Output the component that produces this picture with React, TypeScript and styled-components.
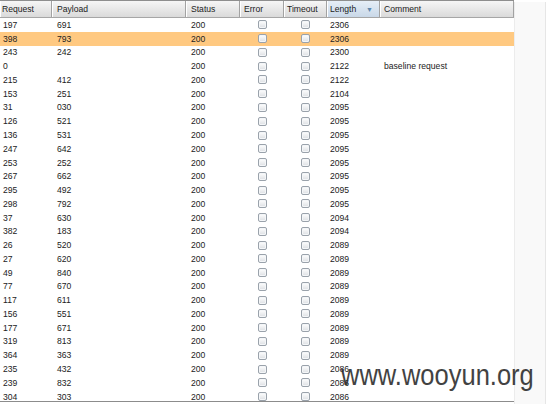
import styled, { createGlobalStyle } from 'styled-components';

const GlobalStyle = createGlobalStyle`
  html, body {
    margin: 0;
    padding: 0;
    background: #ffffff;
  }
  body {
    font-family: "Liberation Sans", Arial, sans-serif;
  }
`;

const COLS = '52px 134px 54px 44px 43px 53px 134px';

const Page = styled.div`
  position: relative;
  width: 546px;
  height: 404px;
  display: flex;
  overflow: hidden;
`;

const Table = styled.div`
  width: 514px;
  height: 401px;
  overflow: hidden;
  border-bottom: 1px solid #8c8c8c;
  display: flex;
  flex-direction: column;
`;

const Filler = styled.div`
  flex: 1;
  background: #f9f9f9;
  border-left: 1px solid #ececec;
  border-right: 1px solid #e6e6e6;
  margin-top: 2px;
`;

const HeaderRow = styled.div`
  display: grid;
  grid-template-columns: ${COLS};
  height: 16px;
  border-top: 1px solid #8e8e8e;
  border-bottom: 1px solid #a6a6a6;
  flex-shrink: 0;
`;

const HeaderCell = styled.div<{ $sorted?: boolean; $pad?: number }>`
  display: flex;
  align-items: center;
  justify-content: space-between;
  padding-left: ${p => p.$pad ?? 4}px;
  padding-right: 6px;
  font-size: 8.6px;
  color: #1c1c1c;
  border-right: 1px solid #a2a2a2;
  box-shadow: inset 1px 0 0 #ffffff;
  background: ${p =>
    p.$sorted
      ? 'linear-gradient(#e6eef7, #c9d8e8)'
      : 'linear-gradient(#f6f6f6, #dadada)'};
`;

const SortArrow = styled.span`
  font-size: 7px;
  color: #5f87ad;
`;

const Row = styled.div<{ $selected?: boolean }>`
  display: grid;
  grid-template-columns: ${COLS};
  height: 13.78px;
  flex-shrink: 0;
  background: ${p => (p.$selected ? '#ffc981' : 'transparent')};
`;

const Cell = styled.div<{ $pad?: number }>`
  display: flex;
  align-items: center;
  padding-left: ${p => p.$pad ?? 5}px;
  font-size: 8.6px;
  color: #222222;
  white-space: nowrap;
`;

const CheckCell = styled.div`
  display: flex;
  align-items: center;
  justify-content: center;
`;

const Check = styled.span`
  width: 7px;
  height: 7px;
  border: 1px solid #9aa2ab;
  border-radius: 2px;
  background: linear-gradient(#ffffff, #dcdfe3);
  box-shadow: inset 0 0 0 1px #f4f6f8;
`;

const Watermark = styled.div`
  position: absolute;
  left: 341px;
  top: 358px;
  font-family: "Liberation Sans", Arial, sans-serif;
  font-size: 30px;
  color: #2e2e2e;
  transform: scaleX(0.85);
  transform-origin: left top;
  white-space: nowrap;
  opacity: 0.9;
`;

type Entry = { req: string; payload: string; len: string; comment?: string };

const rows: Entry[] = [
  { req: '197', payload: '691', len: '2306' },
  { req: '398', payload: '793', len: '2306' },
  { req: '243', payload: '242', len: '2300' },
  { req: '0', payload: '', len: '2122', comment: 'baseline request' },
  { req: '215', payload: '412', len: '2122' },
  { req: '153', payload: '251', len: '2104' },
  { req: '31', payload: '030', len: '2095' },
  { req: '126', payload: '521', len: '2095' },
  { req: '136', payload: '531', len: '2095' },
  { req: '247', payload: '642', len: '2095' },
  { req: '253', payload: '252', len: '2095' },
  { req: '267', payload: '662', len: '2095' },
  { req: '295', payload: '492', len: '2095' },
  { req: '298', payload: '792', len: '2095' },
  { req: '37', payload: '630', len: '2094' },
  { req: '382', payload: '183', len: '2094' },
  { req: '26', payload: '520', len: '2089' },
  { req: '27', payload: '620', len: '2089' },
  { req: '49', payload: '840', len: '2089' },
  { req: '77', payload: '670', len: '2089' },
  { req: '117', payload: '611', len: '2089' },
  { req: '156', payload: '551', len: '2089' },
  { req: '177', payload: '671', len: '2089' },
  { req: '319', payload: '813', len: '2089' },
  { req: '364', payload: '363', len: '2089' },
  { req: '235', payload: '432', len: '2086' },
  { req: '239', payload: '832', len: '2086' },
  { req: '304', payload: '303', len: '2086' },
];

const App = () => {
  return (
    <>
      <GlobalStyle />
      <Page>
        <Table>
          <HeaderRow>
            <HeaderCell $pad={2}>Request</HeaderCell>
            <HeaderCell $pad={5}>Payload</HeaderCell>
            <HeaderCell $pad={5}>Status</HeaderCell>
            <HeaderCell>Error</HeaderCell>
            <HeaderCell $pad={3}>Timeout</HeaderCell>
            <HeaderCell $sorted $pad={3}>
              Length
              <SortArrow>▼</SortArrow>
            </HeaderCell>
            <HeaderCell>Comment</HeaderCell>
          </HeaderRow>
          {rows.map((r, i) => (
            <Row key={r.req} $selected={i === 1}>
              <Cell $pad={3}>{r.req}</Cell>
              <Cell>{r.payload}</Cell>
              <Cell>200</Cell>
              <CheckCell>
                <Check />
              </CheckCell>
              <CheckCell>
                <Check />
              </CheckCell>
              <Cell $pad={3}>{r.len}</Cell>
              <Cell $pad={4}>{r.comment ?? ''}</Cell>
            </Row>
          ))}
        </Table>
        <Filler />
        <Watermark>www.wooyun.org</Watermark>
      </Page>
    </>
  );
};

export default App;
